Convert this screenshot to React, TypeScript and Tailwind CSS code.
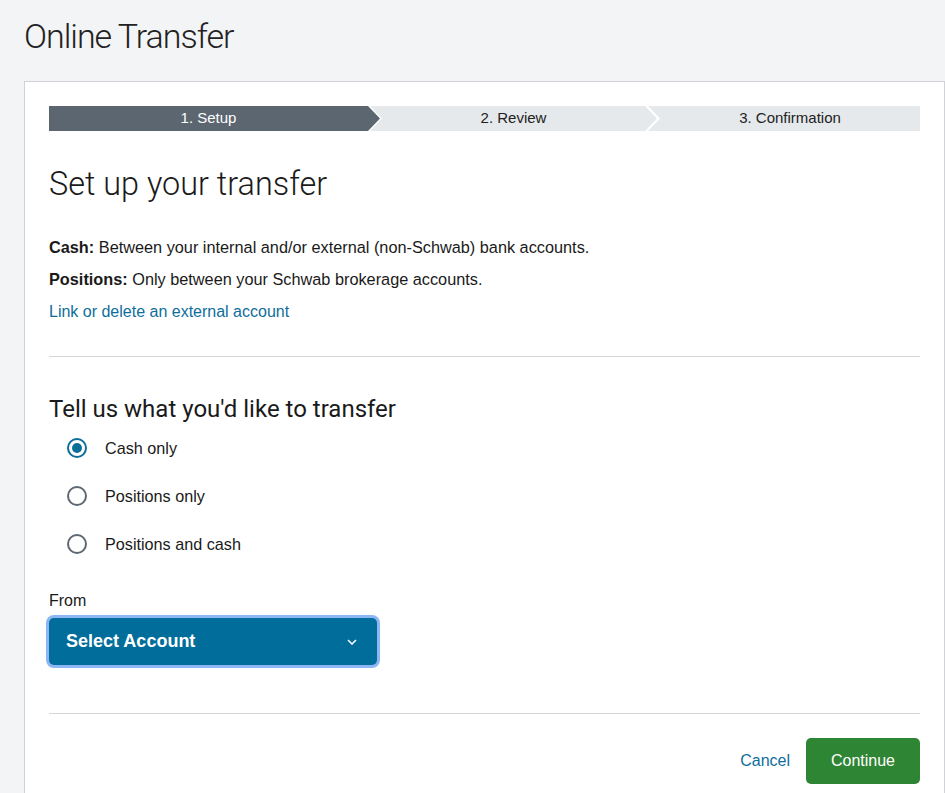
import { useState } from "react";

const steps = [
  { label: "1. Setup", active: true },
  { label: "2. Review", active: false },
  { label: "3. Confirmation", active: false },
];

const options = ["Cash only", "Positions only", "Positions and cash"];

export default function App() {
  const [choice, setChoice] = useState("Cash only");

  return (
    <div className="min-h-[793px] bg-[#f3f4f6] pl-6 pt-4 font-['Liberation_Sans',Arial,sans-serif] text-[#1a1a1a]">
      <h1 className="mb-[25px] h-10 font-['Roboto',sans-serif] text-[34px] font-light leading-10 tracking-[-0.03em] text-[#222]">
        Online Transfer
      </h1>

      <div className="border border-[#cfd3d7] bg-white px-6 pt-6 pb-8">
        {/* step bar */}
        <div className="flex h-[25px] text-[15px]">
          <div className="flex w-[331px] shrink-0 items-center justify-center bg-[#5b6670] pr-3 text-white [clip-path:polygon(0_0,calc(100%-12px)_0,100%_50%,calc(100%-12px)_100%,0_100%)]">
            {steps[0].label}
          </div>
          <div className="-ml-[10px] flex w-[287px] shrink-0 items-center justify-center bg-[#e6e9ec] px-3 text-[#222] [clip-path:polygon(0_0,calc(100%-12px)_0,100%_50%,calc(100%-12px)_100%,0_100%,12px_50%)]">
            {steps[1].label}
          </div>
          <div className="-ml-[9px] flex flex-1 items-center justify-center bg-[#e6e9ec] pl-3 text-[#222] [clip-path:polygon(0_0,100%_0,100%_100%,0_100%,12px_50%)]">
            {steps[2].label}
          </div>
        </div>

        <h2 className="mt-[35px] font-['Roboto',sans-serif] text-[32.4px] font-light leading-9 text-[#1a1a1a]">
          Set up your transfer
        </h2>

        <div className="mt-[35px] space-y-3 text-[16.3px] leading-5">
          <p>
            <b>Cash:</b> Between your internal and/or external (non-Schwab) bank accounts.
          </p>
          <p>
            <b>Positions:</b> Only between your Schwab brokerage accounts.
          </p>
          <a href="#" className="block pt-px text-[16px] text-[#0e6e9b]">
            Link or delete an external account
          </a>
        </div>

        <hr className="mt-[34px] border-[#d4d7da]" />

        <h3 className="mt-[38px] font-['Roboto',sans-serif] text-[24px] leading-7 text-[#1a1a1a]">
          Tell us what you'd like to transfer
        </h3>

        <div className="mt-[13px] space-y-6 pl-[18px]">
          {options.map((o) => (
            <label key={o} className="flex h-6 cursor-pointer items-center gap-[18px] text-[16.2px]">
              <span
                className={
                  o === choice
                    ? "flex h-5 w-5 items-center justify-center rounded-full border-2 border-[#0b6e98]"
                    : "flex h-5 w-5 items-center justify-center rounded-full border-2 border-[#5e6872]"
                }
                onClick={() => setChoice(o)}
              >
                {o === choice && <span className="h-[10px] w-[10px] rounded-full bg-[#0b6e98]" />}
              </span>
              {o}
            </label>
          ))}
        </div>

        <div className="mt-[35px] text-[16px] leading-5">From</div>
        <button className="mt-[7px] flex h-[47px] w-[328px] items-center justify-between rounded-[5px] bg-[#006d9a] pl-[17px] pr-5 text-[18px] font-bold text-white ring-[3px] ring-[#8db6f5]">
          Select Account
          <svg width="10" height="6" viewBox="0 0 10 6" fill="none">
            <path d="M1 1l4 4 4-4" stroke="white" strokeWidth="1.6" />
          </svg>
        </button>

        <hr className="mt-[48px] border-[#d4d7da]" />

        <div className="mt-6 flex items-center justify-end gap-4">
          <button className="text-[16px] text-[#0e6e9b]">Cancel</button>
          <button className="h-[46px] w-[114px] rounded-[5px] bg-[#2e8533] text-[16px] text-white">Continue</button>
        </div>
      </div>
    </div>
  );
}
